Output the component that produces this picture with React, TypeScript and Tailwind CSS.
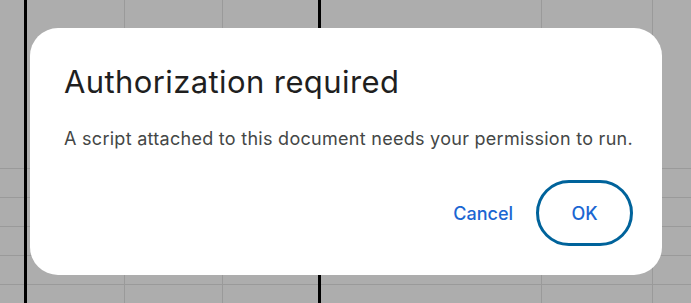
export default function App() {
  const vLines = [124, 222, 541, 652];
  const hLines = [168, 197, 226, 255, 284];

  return (
    <div className="relative w-[691px] h-[303px] overflow-hidden bg-[#adadad] font-['Inter',sans-serif]">
      {/* spreadsheet behind the dimmed overlay */}
      <div className="absolute inset-0">
        {hLines.map((y) => (
          <div key={y} className="absolute left-0 right-0 h-px bg-[#9a9a9a]" style={{ top: y }} />
        ))}
        {vLines.map((x) => (
          <div key={x} className="absolute top-0 bottom-0 w-px bg-[#9a9a9a]" style={{ left: x }} />
        ))}
        <div className="absolute top-0 bottom-0 left-[24px] w-[3px] bg-black" />
        <div className="absolute top-0 bottom-0 left-[318px] w-[3px] bg-black" />
      </div>

      {/* dialog */}
      <div className="relative pt-[28px] pl-[30px]">
        <div className="w-[632px] h-[247px] bg-white rounded-[28px] pl-[34px] pr-[29px] pt-[36px] flex flex-col">
          <h1 className="text-[31px] leading-[36px] tracking-[0.4px] text-[#1f1f1f] font-normal">
            Authorization required
          </h1>
          <p className="mt-[27px] text-[18px] leading-[24px] tracking-[0.28px] text-[#444746]">
            A script attached to this document needs your permission to run.
          </p>
          <div className="mt-[29px] flex items-center justify-end gap-[23px]">
            <button className="text-[18px] font-medium text-[#1b66d2]">Cancel</button>
            <button className="w-[97px] h-[66px] rounded-full border-[3px] border-[#00639b] text-[18px] font-medium text-[#1b66d2] flex items-center justify-center">
              OK
            </button>
          </div>
        </div>
      </div>
    </div>
  );
}
